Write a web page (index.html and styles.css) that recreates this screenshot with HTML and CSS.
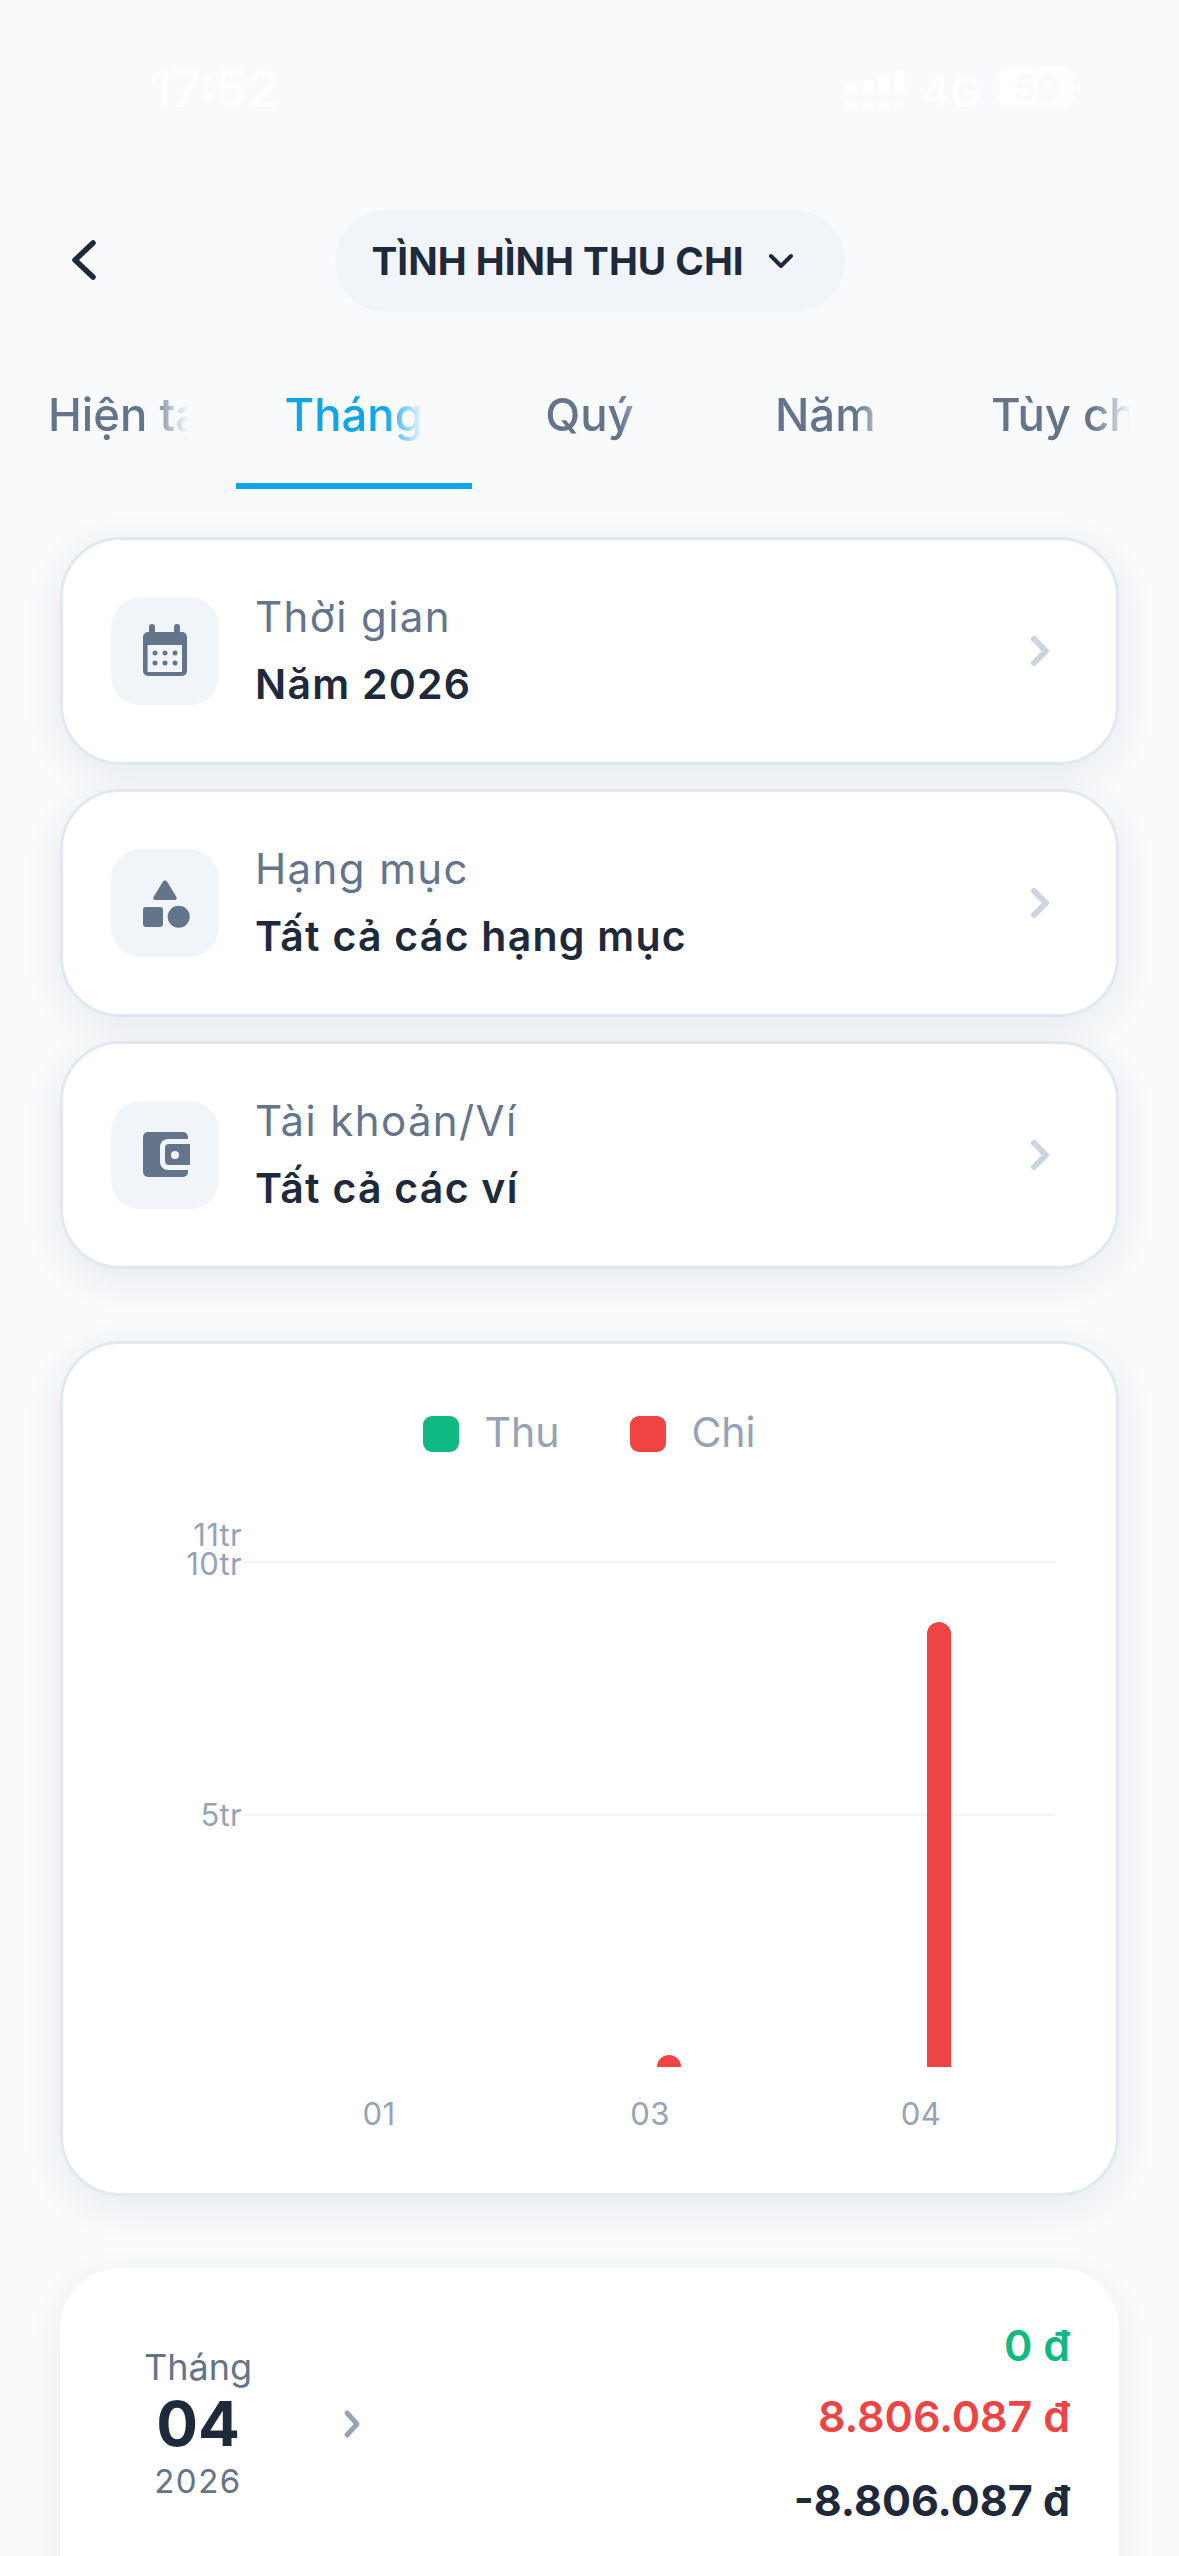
FILE: index.html
```html
<!DOCTYPE html>
<html lang="vi">
<head>
    <meta charset="UTF-8">
    <meta name="viewport" content="width=device-width, initial-scale=1.0">
    <title>Tình hình thu chi</title>
    <link rel="stylesheet" href="styles.css">
</head>
<body>
    <div class="status-bar">
        <span class="status-time">17:52</span>
        <div class="status-right">
            <svg class="signal" width="60" height="44" viewBox="0 0 60 44">
                <rect x="2" y="16" width="10" height="12" rx="3"/>
                <rect x="18" y="13" width="10" height="15" rx="3"/>
                <rect x="34" y="8" width="10" height="20" rx="3"/>
                <rect x="50" y="3" width="10" height="25" rx="3"/>
                <rect x="2" y="33" width="10" height="11" rx="3"/>
                <rect x="18" y="33" width="10" height="11" rx="3"/>
                <rect x="34" y="33" width="10" height="11" rx="3"/>
                <rect x="50" y="33" width="10" height="11" rx="3" opacity="0.4"/>
            </svg>
            <span class="status-net">4G</span>
            <div class="battery">
                <div class="battery-fill"></div>
                <span class="battery-text">50</span>
            </div>
            <div class="battery-nub"></div>
        </div>
    </div>

    <div class="header">
        <svg class="back" width="36" height="52" viewBox="0 0 36 52">
            <path d="M27 7 L9 24 L27 41" />
        </svg>
        <div class="title-pill">
            <span class="title-text">TÌNH HÌNH THU CHI</span>
            <svg class="title-caret" width="26" height="16" viewBox="0 0 26 16">
                <path d="M3 3 L13 13 L23 3" />
            </svg>
        </div>
    </div>

    <div class="tabs">
        <div class="tab"><span class="tab-label">Hiện tại</span></div>
        <div class="tab active"><span class="tab-label">Tháng</span></div>
        <div class="tab"><span class="tab-label">Quý</span></div>
        <div class="tab"><span class="tab-label">Năm</span></div>
        <div class="tab"><span class="tab-label">Tùy chọn</span></div>
    </div>

    <div class="filters">
        <div class="filter-card">
            <div class="filter-icon">
                <svg width="60" height="60" viewBox="0 0 60 60">
                    <path class="ico" d="M17 3a3 3 0 0 1 3 3v5h19V6a3 3 0 0 1 6 0v5h2a5 5 0 0 1 5 5v34a5 5 0 0 1-5 5H13a5 5 0 0 1-5-5V16a5 5 0 0 1 5-5h1V6a3 3 0 0 1 3-3z"/>
                    <rect class="ico-bg" x="12.6" y="24" width="34.4" height="27"/>
                    <g class="ico">
                        <circle cx="20" cy="32" r="2.5"/><circle cx="30" cy="32" r="2.5"/><circle cx="40" cy="32" r="2.5"/>
                        <circle cx="20" cy="42" r="2.5"/><circle cx="30" cy="42" r="2.5"/><circle cx="40" cy="42" r="2.5"/>
                    </g>
                </svg>
            </div>
            <div class="filter-text">
                <div class="filter-label">Thời gian</div>
                <div class="filter-value">Năm 2026</div>
            </div>
            <svg class="filter-arrow" width="24" height="36" viewBox="0 0 24 36"><path d="M4 6 L16 18 L4 30"/></svg>
        </div>
        <div class="filter-card">
            <div class="filter-icon">
                <svg width="60" height="60" viewBox="0 0 60 60">
                    <path class="ico" d="M28 8.500a2.400 2.400 0 0 1 4 0l9.500 15.500a2 2 0 0 1-1.700 3H20.200a2 2 0 0 1-1.700-3z"/>
                    <rect class="ico" x="8" y="34" width="20" height="20" rx="3"/>
                    <circle class="ico" cx="43.700" cy="43.700" r="11"/>
                </svg>
            </div>
            <div class="filter-text">
                <div class="filter-label">Hạng mục</div>
                <div class="filter-value">Tất cả các hạng mục</div>
            </div>
            <svg class="filter-arrow" width="24" height="36" viewBox="0 0 24 36"><path d="M4 6 L16 18 L4 30"/></svg>
        </div>
        <div class="filter-card">
            <div class="filter-icon">
                <svg width="60" height="60" viewBox="0 0 60 60">
                    <rect class="ico" x="8" y="7" width="45" height="45" rx="5"/>
                    <path class="ico-bg" d="M56 14H33a8 8 0 0 0-8 8v15a8 8 0 0 0 8 8h23z"/>
                    <path class="ico" d="M55 19H34a4 4 0 0 0-4 4v13a4 4 0 0 0 4 4h21z"/>
                    <circle class="ico-bg" cx="40" cy="30" r="4"/>
                </svg>
            </div>
            <div class="filter-text">
                <div class="filter-label">Tài khoản/Ví</div>
                <div class="filter-value">Tất cả các ví</div>
            </div>
            <svg class="filter-arrow" width="24" height="36" viewBox="0 0 24 36"><path d="M4 6 L16 18 L4 30"/></svg>
        </div>
    </div>

    <div class="chart-card">
        <div class="legend">
            <div class="legend-item"><span class="swatch green"></span>Thu</div>
            <div class="legend-item"><span class="swatch red"></span>Chi</div>
        </div>
        <div class="plot">
            <span class="y-label" style="top: 1px">11tr</span>
            <span class="y-label" style="top: 30px">10tr</span>
            <span class="y-label" style="top: 281px">5tr</span>
            <div class="grid-line" style="top: 41px"></div>
            <div class="grid-line" style="top: 294px"></div>
            <div class="bar" style="left: 864px; top: 102px; height: 445px"></div>
            <div class="bar" style="left: 594px; top: 535px; height: 12px"></div>
            <span class="x-label" style="left: 316px">01</span>
            <span class="x-label" style="left: 587px">03</span>
            <span class="x-label" style="left: 858px">04</span>
        </div>
    </div>

    <div class="month-card">
        <div class="month-date">
            <span class="month-word">Tháng</span>
            <span class="month-num">04</span>
            <span class="month-year">2026</span>
        </div>
        <svg class="month-arrow" width="20" height="30" viewBox="0 0 20 30"><path d="M4 4 L14 15 L4 26"/></svg>
        <div class="month-values">
            <span class="val income">0 đ</span>
            <span class="val expense">8.806.087 đ</span>
            <span class="val balance">-8.806.087 đ</span>
        </div>
    </div>
</body>
</html>
```
FILE: styles.css
```css
* {
    box-sizing: border-box;
}
body {
    margin: 0;
    width: 1179px;
    height: 2556px;
    overflow: hidden;
    background: #f8fafc;
    font-family: Inter, "Noto Sans", sans-serif;
    color: #1e293b;
}

/* status bar */
.status-bar {
    height: 210px;
    padding: 59px 98px 0 150px;
    display: flex;
    justify-content: space-between;
    align-items: flex-start;
    color: #fff;
}
.status-time {
    font-size: 51px;
    font-weight: 600;
    line-height: 60px;
}
.status-right {
    display: flex;
    align-items: flex-start;
    padding-top: 5px;
}
.signal {
    fill: #fff;
    margin-top: 3px;
}
.status-net {
    font-size: 42px;
    font-weight: 600;
    line-height: 50px;
    margin-left: 17px;
    margin-top: 3px;
}
.battery {
    position: relative;
    width: 75px;
    height: 41px;
    margin-left: 18px;
    margin-top: 3px;
    border-radius: 12px;
    background: rgba(255, 255, 255, 0.5);
    overflow: hidden;
    text-align: center;
}
.battery-fill {
    position: absolute;
    left: 0;
    top: 0;
    bottom: 0;
    width: 38px;
    background: #fff;
}
.battery-text {
    position: relative;
    font-size: 34px;
    font-weight: 700;
    line-height: 41px;
    color: #f8fafc;
}
.battery-nub {
    width: 4px;
    height: 9px;
    margin: 19px 0 0 3px;
    border-radius: 0 3px 3px 0;
    background: rgba(255, 255, 255, 0.5);
}

/* header */
.header {
    position: relative;
    height: 102px;
    display: flex;
    justify-content: center;
}
.back {
    position: absolute;
    left: 66px;
    top: 26px;
    fill: none;
    stroke: #1e293b;
    stroke-width: 5.5;
    stroke-linecap: round;
    stroke-linejoin: round;
}
.title-pill {
    width: 510px;
    height: 102px;
    border-radius: 51px;
    background: #f1f5f9;
    display: flex;
    align-items: center;
    padding-left: 37px;
}
.title-text {
    font-size: 38.7px;
    font-weight: 700;
    white-space: nowrap;
}
.title-caret {
    margin-left: 24px;
    fill: none;
    stroke: #1e293b;
    stroke-width: 4;
    stroke-linecap: round;
    stroke-linejoin: round;
}

/* tabs */
.tabs {
    display: flex;
    margin-top: 48px;
}
.tab {
    width: 236px;
    height: 129px;
    padding-top: 27px;
    display: flex;
    justify-content: center;
    color: #64748b;
    font-size: 45.5px;
    font-weight: 500;
    border-bottom: 6px solid transparent;
}
.tab.active {
    color: #0ea5e9;
    border-bottom-color: #0ea5e9;
}
.tab-label {
    display: block;
    width: 140px;
    height: 60px;
    text-align: center;
    white-space: nowrap;
    overflow: hidden;
    -webkit-mask-image: linear-gradient(to right, #000 72%, transparent);
    mask-image: linear-gradient(to right, #000 72%, transparent);
}

/* filter cards */
.filters {
    margin: 48px 60px 0;
    display: flex;
    flex-direction: column;
    gap: 24px;
}
.filter-card {
    height: 228px;
    background: #fff;
    border: 3px solid #e2e8f0;
    border-radius: 60px;
    box-shadow: 0 10px 40px rgba(15, 23, 42, 0.07);
    display: flex;
    align-items: center;
    padding-left: 48px;
}
.filter-icon {
    width: 108px;
    height: 108px;
    border-radius: 30px;
    background: #f1f5f9;
    display: flex;
    align-items: center;
    justify-content: center;
}
.ico {
    fill: #64748b;
}
.ico-bg {
    fill: #f1f5f9;
}
.filter-text {
    margin-left: 36px;
    padding-bottom: 2px;
    flex: 1;
}
.filter-label {
    font-size: 42px;
    line-height: 52px;
    color: #64748b;
    letter-spacing: 1.4px;
}
.filter-value {
    font-size: 41px;
    line-height: 52px;
    margin-top: 15px;
    font-weight: 600;
    letter-spacing: 1.25px;
}
.filter-arrow {
    margin-right: 62px;
    fill: none;
    stroke: #cbd5e1;
    stroke-width: 6;
    stroke-linecap: round;
    stroke-linejoin: round;
}

/* chart */
.chart-card {
    margin: 72px 60px 0;
    height: 855px;
    background: #fff;
    border: 3px solid #e2e8f0;
    border-radius: 60px;
    box-shadow: 0 10px 40px rgba(15, 23, 42, 0.07);
}
.legend {
    display: flex;
    justify-content: center;
    gap: 71px;
    padding-top: 64px;
}
.legend-item {
    display: flex;
    align-items: center;
    gap: 25px;
    font-size: 41px;
    line-height: 48px;
    color: #94a3b8;
}
.swatch {
    width: 36px;
    height: 36px;
    margin-top: 4px;
    border-radius: 9px;
}
.swatch.green {
    background: #10b981;
}
.swatch.red {
    background: #ef4444;
}
.plot {
    position: relative;
    height: 640px;
    margin-top: 64px;
}
.y-label {
    position: absolute;
    right: 874px;
    font-size: 31px;
    line-height: 28px;
    letter-spacing: 0.3px;
    color: #94a3b8;
    white-space: nowrap;
}
.grid-line {
    position: absolute;
    left: 180px;
    width: 812px;
    height: 2px;
    background: #f1f5f9;
}
.bar {
    position: absolute;
    width: 24px;
    background: #ef4444;
    border-radius: 12px 12px 0 0;
}
.x-label {
    position: absolute;
    top: 576px;
    width: 0;
    display: flex;
    justify-content: center;
    font-size: 31px;
    line-height: 36px;
    letter-spacing: 0.5px;
    color: #94a3b8;
}

/* month row */
.month-card {
    margin: 72px 60px 0;
    height: 400px;
    background: #fff;
    border-radius: 60px;
    box-shadow: 0 10px 40px rgba(15, 23, 42, 0.05);
    display: flex;
    align-items: flex-start;
    padding: 51px 49px 0 60px;
}
.month-date {
    width: 156px;
    margin-top: 26px;
    display: flex;
    flex-direction: column;
    align-items: center;
}
.month-word {
    font-size: 36px;
    line-height: 44px;
    color: #64748b;
}
.month-num {
    font-size: 62px;
    line-height: 70px;
    font-weight: 700;
}
.month-year {
    font-size: 33px;
    line-height: 44px;
    color: #64748b;
    letter-spacing: 1.5px;
}
.month-arrow {
    margin-left: 67px;
    margin-top: 90px;
    fill: none;
    stroke: #94a3b8;
    stroke-width: 5;
    stroke-linecap: round;
    stroke-linejoin: round;
}
.month-values {
    flex: 1;
    display: flex;
    flex-direction: column;
    align-items: flex-end;
    padding-top: 1px;
}
.val {
    font-size: 43px;
    line-height: 50px;
    font-weight: 600;
}
.income {
    color: #10b981;
}
.expense {
    color: #ef4444;
    margin-top: 21px;
}
.balance {
    font-weight: 700;
    margin-top: 34px;
}
```
